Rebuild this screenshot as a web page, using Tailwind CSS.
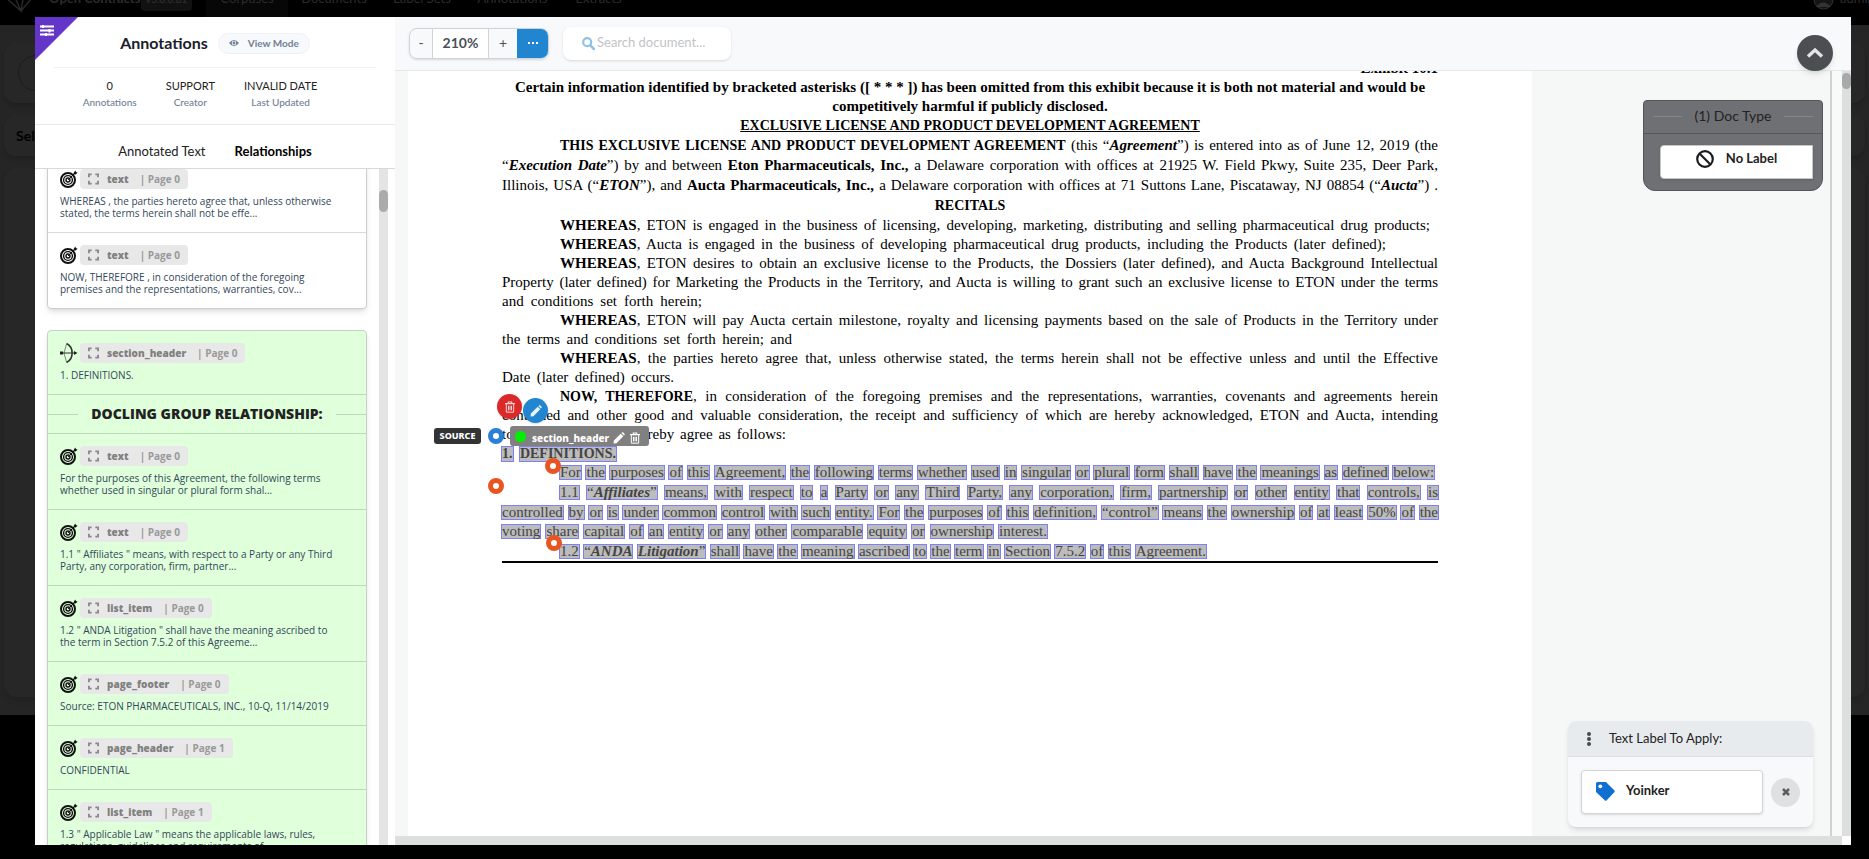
<!DOCTYPE html>
<html lang="en">
<head>
<meta charset="utf-8">
<title>Open Contracts</title>
<script src="https://cdn.jsdelivr.net/npm/@tailwindcss/browser@4"></script>
</head>
<body class="relative h-screen overflow-hidden bg-black font-['Lato',sans-serif] text-[#222]">

<svg class="hidden" aria-hidden="true">
  <symbol id="target" viewBox="0 0 18 18">
    <g fill="none" stroke="#111"><circle cx="8" cy="10" r="7" stroke-width="2"/><circle cx="8" cy="10" r="4.4" stroke-width="1.4"/><circle cx="8" cy="10" r="2" stroke-width="1.4"/><path d="M8 10 L15.5 2.5" stroke-width="1"/></g>
    <path d="M13.5 3.2 L15.2 .4 L16 2 L17.6 2.8 L15.6 4.4 L13.6 4.4Z" fill="#111"/>
  </symbol>
  <symbol id="bow" viewBox="0 0 18 20">
    <path d="M6.5 .5 C14 4 14 16 6.5 19.500" fill="none" stroke="#333" stroke-width="1.6"/>
    <path d="M6.5 1 L4 10 L6.5 19" fill="none" stroke="#555" stroke-width=".7"/>
    <path d="M1 10H16" stroke="#333" stroke-width="1"/><path d="M14 8 L17.5 10 L14 12Z M0 8.5H3V11.5H0Z" fill="#222"/>
  </symbol>
  <symbol id="expand" viewBox="0 0 12 12">
    <path d="M1 4V1H4 M8 1H11V4 M11 8V11H8 M4 11H1V8" fill="none" stroke="#8a8a8a" stroke-width="2"/>
  </symbol>
  <symbol id="trash" viewBox="0 0 12 14">
    <path d="M0 3H12 M4 3V1H8V3" fill="none" stroke="currentColor" stroke-width="1.4"/>
    <path d="M1.6 3.5V13.2H10.4V3.5 M4.2 5.5V11 M6 5.5V11 M7.8 5.5V11" fill="none" stroke="currentColor" stroke-width="1.2"/>
  </symbol>
  <symbol id="pencil" viewBox="0 0 14 14">
    <path d="M1 10 L9 2 L12 5 L4 13 L.6 13.4Z M9.8 1.2 L10.8 .4 Q11.4 0 12 .6 L13.4 2 Q14 2.6 13.4 3.4 L12.8 4.2Z" fill="currentColor"/>
  </symbol>
</svg>

<!-- Dimmed application behind the dialog -->
<div class="absolute inset-x-0 top-0" aria-hidden="true">
  <div class="h-[25px] overflow-hidden bg-black text-[13px] text-[#2c2c2c]">
    <div class="-mt-[15px] flex h-[28px] items-center whitespace-nowrap">
      <svg class="ml-1 h-7 w-7 shrink-0" viewBox="0 0 28 28" fill="none" stroke="#2a2a2a" stroke-width="1.4"><path d="M1 12 L17 26 L27 14 M9 8 L17 26 L20 8"/></svg>
      <span class="ml-[17px] w-[92px] shrink-0 font-bold">Open Contracts</span>
      <span class="mr-[14px] w-[51px] shrink-0 rounded bg-[#111] py-1 text-center text-[10px] font-bold">v3.0.0.b1</span>
      <span class="flex h-[76px] w-[82px] shrink-0 items-center justify-center bg-[#070707]">Corpuses</span>
      <span class="w-[92px] text-center">Documents</span>
      <span class="w-[84px] text-center">Label Sets</span>
      <span class="w-[97px] text-center">Annotations</span>
      <span class="w-[75px] text-center">Extracts</span>
      <span class="ml-auto flex w-[56px] shrink-0 items-center gap-[6px] overflow-hidden">
        <svg class="h-[21px] w-[21px] shrink-0" viewBox="0 0 21 21"><circle cx="10.5" cy="10.5" r="9.5" fill="#151515" stroke="#333"/><path d="M3 18 Q10 9 18 18" fill="#333"/></svg>admin</span>
    </div>
  </div>
  <div class="flex h-[690px] flex-col gap-3 bg-[#252525] px-1 pt-[18px] pb-[18px]">
    <div class="flex h-[60px] shrink-0 items-center justify-between rounded-xl bg-[#272727] px-[14px] shadow-md"><span class="h-9 w-9 rounded-full border border-[#1c1c1c]"></span><span class="text-[#111]">▾</span></div>
    <div class="flex h-[41px] shrink-0 items-center rounded-xl bg-[#272727] px-3 text-sm font-bold text-black shadow-md">Selected</div>
    <div class="grow rounded-xl bg-[#272727] shadow-md"></div>
  </div>
</div>

<!-- Dialog -->
<div class="absolute inset-0 flex pt-[17px] pr-[18px] pb-[14px] pl-[35px]">

  <aside class="flex w-[360px] shrink-0 flex-col bg-white">
    <header class="relative border-b border-[#e8e8ea] px-[19px] pb-[14px]">
      <button class="absolute top-0 left-0 h-[43px] w-[43px]" aria-label="Filters">
        <svg viewBox="0 0 43 43"><path d="M0 0H43L0 43Z" fill="#6435c9"/><path d="M5 9.500H19 M5 13.500H19 M5 17.500H19" stroke="#fff" stroke-width="2"/><path d="M8 8V11 M14.500 12V15.500 M11 16V19" stroke="#fff" stroke-width="2"/></svg>
      </button>
      <div class="flex h-[51px] items-center justify-center gap-[10px] border-b border-[#f0f0f2] pt-[2px]">
        <h1 class="text-base font-bold text-[#1a202c]">Annotations</h1>
        <button class="flex h-[21px] items-center gap-[9px] rounded-full border border-[#edf1f6] bg-[#f7f9fc] px-[10px] text-[10px] font-bold text-[#718096]">
          <svg class="h-[10px] w-[10px]" viewBox="0 0 16 12"><path d="M0 6 Q8-4 16 6 Q8 16 0 6Z" fill="#718096"/><circle cx="8" cy="6" r="3.600" fill="#f7f9fc"/><circle cx="8" cy="6" r="2.300" fill="#718096"/></svg>
          View Mode
        </button>
      </div>
      <dl class="mt-[10px] flex justify-center gap-[29px] pr-[30px] text-center">
        <div class="flex flex-col-reverse"><dt class="text-[10px] leading-4 font-medium text-[#718096]">Annotations</dt><dd class="text-[11px] leading-4">0</dd></div>
        <div class="flex flex-col-reverse"><dt class="text-[10px] leading-4 font-medium text-[#718096]">Creator</dt><dd class="text-[11px] leading-4">SUPPORT</dd></div>
        <div class="flex flex-col-reverse"><dt class="text-[10px] leading-4 font-medium text-[#718096]">Last Updated</dt><dd class="text-[11px] leading-4">INVALID DATE</dd></div>
      </dl>
    </header>
    <nav class="flex h-[44px] shrink-0 items-end justify-center gap-[29px] border-b border-[#d9d9db] pb-[7px] text-[13px] leading-5">
      <button>Annotated Text</button>
      <button class="font-bold text-black">Relationships</button>
    </nav>

    <div class="flex min-h-0 grow pr-[7px]">
      <div id="list" class="min-w-0 grow overflow-hidden px-3 font-['Open_Sans',sans-serif]"></div>
      <div class="w-[9px] bg-[#e4e4e4] pt-[21px]"><div class="h-[22px] rounded-full bg-[#ababab]"></div></div>
    </div>
  </aside>

  <main class="relative flex min-w-0 grow flex-col">
    <header class="flex h-[54px] shrink-0 items-center gap-[14px] border-b border-[#e2e8f0] bg-[#f8f9fb] pb-px pl-[14px]">
      <div class="flex h-[31px] overflow-hidden rounded-lg border border-[#cfd4dc] text-sm text-[#4a5058] shadow-sm">
        <button class="w-[23px] border-r border-[#cfd4dc]" aria-label="Zoom out">-</button>
        <span class="flex w-[55px] items-center justify-center bg-white font-bold">210%</span>
        <button class="w-[29px] border-l border-[#cfd4dc]" aria-label="Zoom in">+</button>
        <button class="-my-px -mr-px flex w-[32px] items-center justify-center gap-[2px] bg-[#2185d0]" aria-label="More"><span class="h-[2px] w-[2px] bg-white"></span><span class="h-[2px] w-[2px] bg-white"></span><span class="h-[2px] w-[2px] bg-white"></span></button>
      </div>
      <label class="flex h-[33px] w-[168px] items-center rounded-lg bg-white pl-[19px] shadow-sm">
        <svg class="h-[13px] w-[13px] shrink-0" viewBox="0 0 13 13" fill="none" stroke="#90c2e8"><circle cx="5.200" cy="5.200" r="4" stroke-width="2.200"/><path d="M8.300 8.300L12 12" stroke-width="2.600" stroke-linecap="round"/></svg>
        <input class="w-[120px] pl-[2px] text-[13px] outline-none placeholder:text-[#c2c4c6]" placeholder="Search document..." aria-label="Search document">
      </label>
    </header>

    <div class="flex min-h-0 grow">
      <div class="flex min-w-0 grow flex-col">
        <div class="flex min-h-0 grow overflow-hidden bg-[#f6f8f8]">
          <div class="grow overflow-hidden border-r-2 border-[#d0d2d2] pl-[13px]">
            <article id="page" class="relative flow-root h-full w-[1124px] bg-white px-[94px] font-['Liberation_Serif',serif] text-[15px] text-black">
            </article>
          </div>
          <div class="w-[10px] shrink-0 bg-[#f8fafa]"></div>
        </div>
        <div class="h-[9px] shrink-0 bg-[#dddfdf]"></div>
      </div>
      <div class="mb-[9px] w-[9px] shrink-0 bg-[#dddfdf] pt-[2px] shadow-[0_9px_0_#fff]"><div class="h-4 rounded-full bg-[#a8aaaa]"></div></div>
    </div>

    <button class="absolute top-[18px] right-[18px] flex h-9 w-9 items-center justify-center rounded-full bg-[#4b4f52] shadow-md" aria-label="Collapse">
      <svg class="h-[18px] w-[18px]" viewBox="0 0 18 18"><path d="M2 12.500L9 6L16 12.500" fill="none" stroke="#e3e4e4" stroke-width="3.400"/></svg>
    </button>

    <section class="absolute top-[83px] right-[28px] w-[180px] rounded-t rounded-b-xl border border-[#55565a] bg-[#6f7073]">
      <h2 class="flex h-[33px] items-center gap-3 border-b border-[#55565a] px-[9px] pb-[2px] text-sm text-[#202224]"><span class="h-px grow bg-[#858689]"></span>(1) Doc Type<span class="h-px grow bg-[#858689]"></span></h2>
      <div class="py-[11px] pr-[9px] pl-4">
        <div class="flex h-[34px] items-center justify-center gap-3 rounded-l border border-[#c8c8ca] bg-white pb-[6px] text-[13px] font-bold shadow-sm">
          <svg class="h-[18px] w-[18px]" viewBox="0 0 18 18" fill="none" stroke="#1b1c1d" stroke-width="2.200"><circle cx="9" cy="9" r="7.800"/><path d="M3.500 3.500L14.500 14.500"/></svg>
          No Label
        </div>
      </div>
    </section>

    <section class="absolute right-[38px] bottom-[18px] w-[245px] overflow-hidden rounded-lg bg-[#f8f9fb] shadow-md">
      <h2 class="flex h-[36px] items-center gap-[18px] border-b border-[#dadde2] bg-[#e8ebee] pt-px pl-[19px] text-[13px]">
        <svg class="h-[14px] w-1" viewBox="0 0 4 14" fill="#454b52"><circle cx="2" cy="2" r="2"/><circle cx="2" cy="7" r="2"/><circle cx="2" cy="12" r="2"/></svg>
        Text Label To Apply:
      </h2>
      <div class="flex items-center gap-2 p-[13px]">
        <button class="flex h-[44px] grow items-center gap-[11px] rounded border border-[#d4d4d5] bg-white pb-[2px] pl-[14px] text-[13px] font-bold shadow">
          <svg class="h-[19px] w-[19px]" viewBox="0 0 19 19"><path d="M0 1.500Q0 0 1.500 0H10L18.500 8.500Q19 9.500 18.500 10L10.500 18.500Q9.500 19 9 18.500L0 10Z" fill="#1070d2"/><circle cx="4.300" cy="4.300" r="1.900" fill="#fff"/></svg>
          Yoinker
        </button>
        <button class="flex h-[29px] w-[29px] items-center justify-center rounded-full bg-[#dfe0e1]" aria-label="Clear label">
          <svg class="h-2 w-2" viewBox="0 0 8 8"><path d="M1 1L7 7M7 1L1 7" stroke="#5d5e5f" stroke-width="2.500"/></svg>
        </button>
      </div>
    </section>
  </main>
</div>

<script>
const cards = [
  { tone: 'bg-white', items: [
    ['target', 'text', 0, ['WHEREAS , the parties hereto agree that, unless otherwise', 'stated, the terms herein shall not be effe...']],
    ['target', 'text', 0, ['NOW, THEREFORE , in consideration of the foregoing', 'premises and the representations, warranties, cov...']]] },
  { tone: 'bg-[#e0ffdb]', items: [
    ['bow', 'section_header', 0, ['1. DEFINITIONS.']],
    'DOCLING GROUP RELATIONSHIP:',
    ['target', 'text', 0, ['For the purposes of this Agreement, the following terms', 'whether used in singular or plural form shal...']],
    ['target', 'text', 0, ['1.1 " Affiliates " means, with respect to a Party or any Third', 'Party, any corporation, firm, partner...']],
    ['target', 'list_item', 0, ['1.2 " ANDA Litigation " shall have the meaning ascribed to', 'the term in Section 7.5.2 of this Agreeme...']],
    ['target', 'page_footer', 0, ['Source: ETON PHARMACEUTICALS, INC., 10-Q, 11/14/2019']],
    ['target', 'page_header', 1, ['CONFIDENTIAL']],
    ['target', 'list_item', 1, ['1.3 " Applicable Law " means the applicable laws, rules,', 'regulations, guidelines and requirements of...']]] },
];
document.getElementById('list').innerHTML = cards.map((card, n) => `
  <section class="${n ? 'mt-[21px]' : '-mt-[13px]'} rounded border border-[#c9d0c9] shadow-md ${card.tone}">${card.items.map((it, i) => {
    const edge = i ? 'border-t border-black/15' : '';
    if (typeof it === 'string') return `<h3 class="flex h-[39px] items-center gap-[13px] text-sm font-extrabold whitespace-nowrap ${edge}"><span class="h-px grow bg-black/15"></span>${it}<span class="h-px grow bg-black/15"></span></h3>`;
    return `<div class="px-3 pt-3 pb-[13px] ${edge}">
      <div class="flex h-5 items-center gap-[2px]"><svg class="h-5 w-[18px]"><use href="#${it[0]}"/></svg>
        <button class="flex h-5 items-center rounded bg-[#e8e8e8] px-2 text-[10px] font-bold text-[#999]"><svg class="mr-2 h-3 w-[11px]"><use href="#expand"/></svg><span class="mr-[11px] font-extrabold text-[#808080]">${it[1]}</span>| Page ${it[2]}</button></div>
      <p class="mt-[6px] text-[10px] leading-3 whitespace-nowrap text-[#33475a]">${it[3].join('<br>')}</p></div>`;
  }).join('')}</section>`).join('');

// Each line: [layout, markup, right edge]. Layouts: c centred, r right, j justified up to the right edge;
// i = first-line indent, t = tokens highlighted, w = 20px leading.
const FULL = 936;
const lines = [
  ['r', '<b>Exhibit 10.1</b>'],
  ['c', '<b>Certain information identified by bracketed asterisks ([ * * * ]) has been omitted from this exhibit because it is both not material and would be</b>'],
  ['c', '<b>competitively harmful if publicly disclosed.</b>'],
  ['c', '<b class="text-sm leading-none"><u>EXCLUSIVE LICENSE AND PRODUCT DEVELOPMENT AGREEMENT</u></b>'],
  ['jiw', '<b class="text-sm leading-none">THIS EXCLUSIVE LICENSE AND PRODUCT DEVELOPMENT AGREEMENT</b> (this “<b><i>Agreement</i></b>”) is entered into as of June 12, 2019 (the'],
  ['jw', '“<b><i>Execution Date</i></b>”) by and between <b>Eton Pharmaceuticals, Inc.,</b> a Delaware corporation with offices at 21925 W. Field Pkwy, Suite 235, Deer Park,'],
  ['jw', 'Illinois, USA (“<b><i>ETON</i></b>”), and <b>Aucta Pharmaceuticals, Inc.,</b> a Delaware corporation with offices at 71 Suttons Lane, Piscataway, NJ 08854 (“<b><i>Aucta</i></b>”) .'],
  ['cw', '<b class="text-sm leading-none">RECITALS</b>'],
  ['jiw', '<b>WHEREAS</b>, ETON is engaged in the business of licensing, developing, marketing, distributing and selling pharmaceutical drug products;', 928],
  ['ji', '<b>WHEREAS</b>, Aucta is engaged in the business of developing pharmaceutical drug products, including the Products (later defined);', 884],
  ['ji', '<b>WHEREAS</b>, ETON desires to obtain an exclusive license to the Products, the Dossiers (later defined), and Aucta Background Intellectual'],
  ['j', 'Property (later defined) for Marketing the Products in the Territory, and Aucta is willing to grant such an exclusive license to ETON under the terms'],
  ['j', 'and conditions set forth herein;', 200],
  ['ji', '<b>WHEREAS</b>, ETON will pay Aucta certain milestone, royalty and licensing payments based on the sale of Products in the Territory under'],
  ['j', 'the terms and conditions set forth herein; and', 290],
  ['ji', '<b>WHEREAS</b>, the parties hereto agree that, unless otherwise stated, the terms herein shall not be effective unless and until the Effective'],
  ['j', 'Date (later defined) occurs.', 172],
  ['ji', '<b class="text-sm leading-none">NOW, THEREFORE</b>, in consideration of the foregoing premises and the representations, warranties, covenants and agreements herein'],
  ['j', 'contained and other good and valuable consideration, the receipt and sufficiency of which are hereby acknowledged, ETON and Aucta, intending'],
  ['j', 'to be legally bound, hereby agree as follows:', 284],
  ['jt', '*1. *DEFINITIONS.', 114],
  ['jit', 'For the purposes of this Agreement, the following terms whether used in singular or plural form shall have the meanings as defined below:', 932],
  ['jitw', '1.1 “_Affiliates_” means, with respect to a Party or any Third Party, any corporation, firm, partnership or other entity that controls, is'],
  ['jtw', 'controlled by or is under common control with such entity. For the purposes of this definition, “control” means the ownership of at least 50% of the'],
  ['jt', 'voting share capital of an entity or any other comparable equity or ownership interest.', 545],
  ['jitw', '1.2 “_ANDA_ _Litigation_” shall have the meaning ascribed to the term in Section 7.5.2 of this Agreement.', 704],
];
const align = { c: 'text-center', r: 'text-right', j: '[text-align-last:justify]' };
const token = w => `<mark class="-mx-px inline-block border border-[#8080f5] bg-[#bcbcbc] leading-[13px] text-[#444]">${w.startsWith('*') ? '<b class="text-sm leading-none">' + w.slice(1) + '</b>' : w.replace(/_(.+)_/, '<b><i>$1</i></b>')}</mark>`;
document.getElementById('page').innerHTML = '<div class="-mt-3">' + lines.map(([k, s, edge = FULL]) =>
  `<p style="width:${edge}px" class="whitespace-nowrap ${align[k[0]]} ${k.includes('i') ? 'pl-[58px]' : ''} ${k.includes('w') ? 'leading-5' : 'leading-[19px]'}">${k.includes('t') ? s.split(' ').map(token).join(' ') : s}</p>`).join('') + `</div>
  <hr class="border-t-2 border-black">
  <button class="absolute top-[323px] left-[89px] flex h-[25px] w-[25px] items-center justify-center rounded-full bg-[#db2828] text-white/80 shadow" aria-label="Delete relationship"><svg class="h-3 w-[10px]"><use href="#trash"/></svg></button>
  <button class="absolute top-[327px] left-[115px] flex h-[25px] w-[25px] items-center justify-center rounded-full bg-[#2185d0] text-white/90 shadow" aria-label="Edit relationship"><svg class="h-3 w-3"><use href="#pencil"/></svg></button>
  <span class="absolute top-[357px] left-[26px] flex h-4 w-[47px] items-center justify-center rounded-[3px] bg-[#333] font-['Noto_Sans',sans-serif] text-[9px] font-extrabold text-white">SOURCE</span>
  <span class="absolute top-[357px] left-[80px] h-4 w-4 rounded-full border-[5px] border-[#2a7fd8] bg-white"></span>
  <span class="absolute top-[387px] left-[137px] h-4 w-4 rounded-full border-[5px] border-[#ea5420] bg-white"></span>
  <span class="absolute top-[407px] left-[80px] h-4 w-4 rounded-full border-[5px] border-[#ea5420] bg-white"></span>
  <span class="absolute top-[464px] left-[138px] h-4 w-4 rounded-full border-[5px] border-[#ea5420] bg-white"></span>
  <div class="absolute top-[355px] left-[102px] flex h-5 w-[139px] items-center rounded-[3px] bg-[#808080] pl-[5px] font-['Noto_Sans',sans-serif] text-[10px] font-extrabold text-white"><span class="mr-[6px] h-[11px] w-[11px] shrink-0 rounded-full bg-[#00f000]"></span><span class="pt-1">section_header</span><button class="ml-1 pt-1" aria-label="Edit label"><svg class="h-3 w-3"><use href="#pencil"/></svg></button><button class="ml-[5px] pt-1" aria-label="Delete label"><svg class="h-3 w-[10px]"><use href="#trash"/></svg></button></div>`;
</script>
</body>
</html>
